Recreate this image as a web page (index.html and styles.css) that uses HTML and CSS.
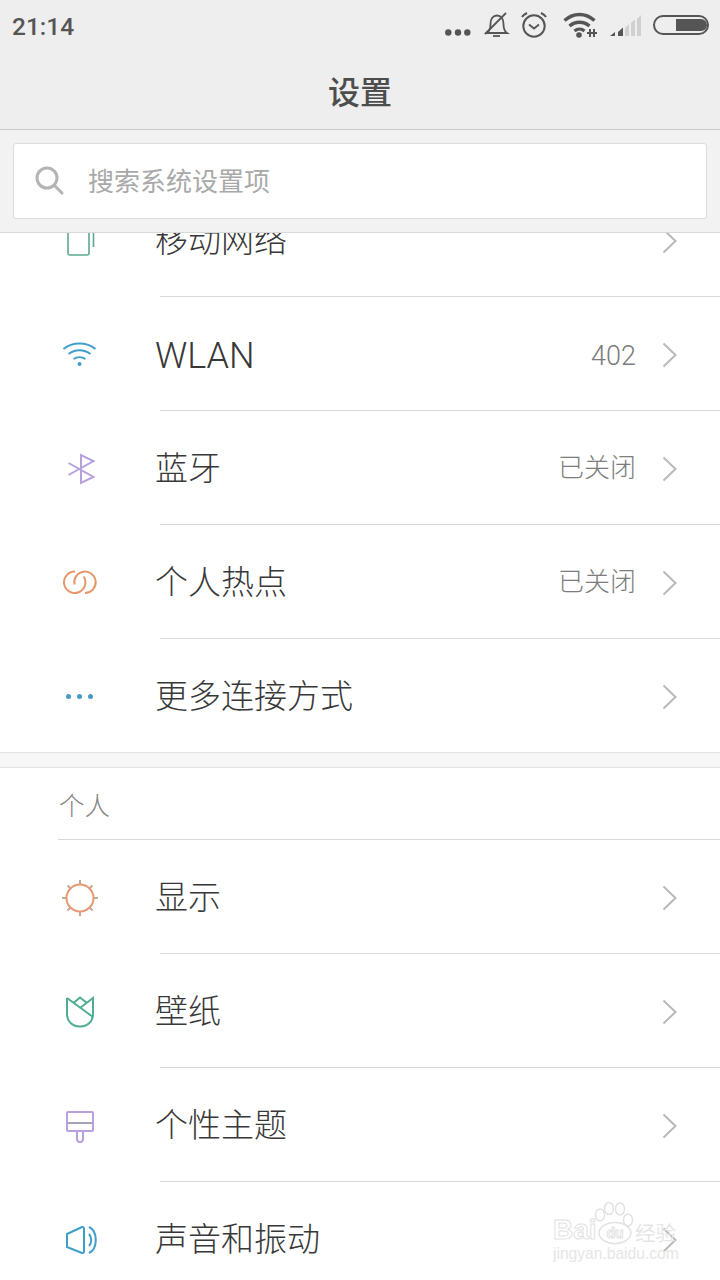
FILE: index.html
```html
<!DOCTYPE html>
<html lang="zh">
<head>
<meta charset="utf-8">
<title>设置</title>
<link rel="stylesheet" href="styles.css">
</head>
<body>
<div class="phone">
  <header class="top">
    <div class="status">
      <span class="time">21:14</span>
      <svg class="status-icons" width="270" height="40" viewBox="0 0 270 40" fill="none" stroke="#555" stroke-width="2">
        <g fill="#555" stroke="none"><circle cx="8.300" cy="21.500" r="3.200"/><circle cx="18" cy="21.500" r="3.200"/><circle cx="27.300" cy="21.500" r="3.200"/></g>
        <path d="M47 22c3-2 3.500-5 3.500-9 0-5 2.500-8.500 6.500-8.500s6.500 3.500 6.500 8.500c0 4 .5 7 3.500 9z" stroke-width="1.800"/>
        <path d="M45 23 66 2" stroke-width="1.800"/>
        <path d="M53 25h7" stroke-width="1.800"/>
        <circle cx="94" cy="15" r="10.700" stroke-width="2"/>
        <path d="M89 13.500l5 4 5-4" stroke-width="1.800"/>
        <path d="M82 6c1-2 3-3 5-4M106 6c-1-2-3-3-5-4" stroke-width="2"/>
        <path d="M124.500 9.500c9-8 21-8 30 0" stroke-width="3.400"/>
        <path d="M129.500 15c6-5 14-5 20 0" stroke-width="3.400"/>
        <path d="M134.500 20c3-2.500 7-2.500 10 0" stroke-width="3.200"/>
        <circle cx="139" cy="24" r="2.800" fill="#555" stroke="none"/>
        <path d="M150 18v8M154 18v8M147 22h10" stroke-width="2"/>
        <path d="M170 25l5-4v4z" fill="#555" stroke="none"/>
        <path d="M178 21l5-4.500V25h-5z" fill="#555" stroke="none"/>
        <path d="M185 17l4-4v12h-4z" fill="#d0d0d0" stroke="none"/>
        <path d="M191 12l4-3.500V25h-4z" fill="#d0d0d0" stroke="none"/>
        <path d="M197 8l4-4v21h-4z" fill="#d0d0d0" stroke="none"/>
        <rect x="214" y="5" width="54" height="18" rx="9" stroke-width="2"/>
        <path d="M236 8h25a6 6 0 0 1 0 12h-25z" fill="#555" stroke="none"/>
      </svg>
    </div>
    <h1 class="title">设置</h1>
  </header>
  <div class="search-wrap">
    <div class="search">
      <svg class="search-icon" width="30" height="30" viewBox="0 0 30 30" fill="none" stroke="#b4b4b4" stroke-width="3">
        <circle cx="12" cy="12" r="10"/><path d="M19.500 19.500 27 27" stroke-linecap="round"/>
      </svg>
      <span class="search-text">搜索系统设置项</span>
    </div>
  </div>
  <main class="list">
    <div class="scroller">
      <div class="row">
        <span class="ico"><svg width="40" height="40" viewBox="0 0 40 40" fill="none" stroke="#5ea893" stroke-width="1.600"><rect x="9" y="3" width="21" height="32" rx="2"/><path d="M34.500 9v18"/></svg></span>
        <span class="label">移动网络</span>
        <svg class="chev" width="16" height="26" viewBox="0 0 16 26" fill="none" stroke="#b9b9b9" stroke-width="2"><path d="M1.500 1.500 13.500 13 1.500 24.500"/></svg>
      </div>
      <div class="row">
        <span class="ico"><svg width="40" height="40" viewBox="0 0 40 40" fill="none" stroke="#409fc9" stroke-width="2"><path d="M4.500 15c9-7.500 23-7.500 32 0"/><path d="M9.500 20c6.500-5 15.500-5 22 0"/><path d="M14.500 25c3.500-2.500 8.500-2.500 12 0"/><circle cx="20.500" cy="30" r="2" fill="#409fc9" stroke="none"/></svg></span>
        <span class="label latin">WLAN</span>
        <span class="value latin-value">402</span>
        <svg class="chev" width="16" height="26" viewBox="0 0 16 26" fill="none" stroke="#b9b9b9" stroke-width="2"><path d="M1.500 1.500 13.500 13 1.500 24.500"/></svg>
      </div>
      <div class="row">
        <span class="ico"><svg width="40" height="40" viewBox="0 0 40 40" fill="none" stroke="#b7a0de" stroke-width="2"><path d="M9.500 15l25 14L22 35V7l12.500 6-25 14"/></svg></span>
        <span class="label">蓝牙</span>
        <span class="value">已关闭</span>
        <svg class="chev" width="16" height="26" viewBox="0 0 16 26" fill="none" stroke="#b9b9b9" stroke-width="2"><path d="M1.500 1.500 13.500 13 1.500 24.500"/></svg>
      </div>
      <div class="row">
        <span class="ico"><svg width="40" height="40" viewBox="0 0 40 40" fill="none" stroke="#e6986c" stroke-width="2"><path d="M16 9.600A10.700 10.700 0 1 0 24.700 14.500"/><path d="M15.500 22.500A10.700 10.700 0 1 1 26 31"/></svg></span>
        <span class="label">个人热点</span>
        <span class="value">已关闭</span>
        <svg class="chev" width="16" height="26" viewBox="0 0 16 26" fill="none" stroke="#b9b9b9" stroke-width="2"><path d="M1.500 1.500 13.500 13 1.500 24.500"/></svg>
      </div>
      <div class="row row-last">
        <span class="ico"><svg width="40" height="40" viewBox="0 0 40 40" fill="#4499c8"><circle cx="9.500" cy="20.500" r="2.500"/><circle cx="20.500" cy="20.500" r="2.500"/><circle cx="31.500" cy="20.500" r="2.500"/></svg></span>
        <span class="label">更多连接方式</span>
        <svg class="chev" width="16" height="26" viewBox="0 0 16 26" fill="none" stroke="#b9b9b9" stroke-width="2"><path d="M1.500 1.500 13.500 13 1.500 24.500"/></svg>
      </div>
      <div class="gap"></div>
      <div class="section">个人</div>
      <div class="row">
        <span class="ico"><svg width="40" height="40" viewBox="0 0 40 40" fill="none" stroke="#e59a6f" stroke-width="2"><circle cx="21" cy="21" r="13.500"/><path stroke="#c9a690" d="M21 3v4M21 35v4M3 21h4M35 21h4M8.500 8.500l3 3M30.500 30.500l3 3M8.500 33.500l3-3M30.500 11.500l3-3"/></svg></span>
        <span class="label">显示</span>
        <svg class="chev" width="16" height="26" viewBox="0 0 16 26" fill="none" stroke="#b9b9b9" stroke-width="2"><path d="M1.500 1.500 13.500 13 1.500 24.500"/></svg>
      </div>
      <div class="row">
        <span class="ico"><svg width="40" height="40" viewBox="0 0 40 40" fill="none" stroke="#4fae92" stroke-width="2"><path d="M8 7v16c0 8 6 12.500 13 12.500S34 31 34 23V7L21 17"/><path d="M8 7l26 19"/><path d="M14.500 12 21 6.500 28 12"/></svg></span>
        <span class="label">壁纸</span>
        <svg class="chev" width="16" height="26" viewBox="0 0 16 26" fill="none" stroke="#b9b9b9" stroke-width="2"><path d="M1.500 1.500 13.500 13 1.500 24.500"/></svg>
      </div>
      <div class="row">
        <span class="ico"><svg width="40" height="40" viewBox="0 0 40 40" fill="none" stroke="#b9a0e0" stroke-width="2"><path d="M9 7h24a1 1 0 0 1 1 1v17a1 1 0 0 1-1 1H9a1 1 0 0 1-1-1V8a1 1 0 0 1 1-1z"/><path d="M8 18h26" stroke="#aa9fbd"/><path d="M18 26v8a3 3 0 0 0 6 0v-8"/></svg></span>
        <span class="label">个性主题</span>
        <svg class="chev" width="16" height="26" viewBox="0 0 16 26" fill="none" stroke="#b9b9b9" stroke-width="2"><path d="M1.500 1.500 13.500 13 1.500 24.500"/></svg>
      </div>
      <div class="row">
        <span class="ico"><svg width="40" height="40" viewBox="0 0 40 40" fill="none" stroke="#409fc9" stroke-width="2"><path d="M8 15 23 8a1.500 1.500 0 0 1 2 1.500v23a1.500 1.500 0 0 1-2 1.500L8 28z"/><path d="M30 15c3 3.500 3 8.500 0 12"/><path d="M30 8c9 4 9 22 0 26"/></svg></span>
        <span class="label">声音和振动</span>
        <svg class="chev" width="16" height="26" viewBox="0 0 16 26" fill="none" stroke="#b9b9b9" stroke-width="2"><path d="M1.500 1.500 13.500 13 1.500 24.500"/></svg>
      </div>
    </div>
  </main>
  <svg class="mark" width="130" height="70" viewBox="0 0 130 70">
    <text class="mark-bai" x="0" y="39">Bai</text>
    <g class="mark-paw">
      <ellipse cx="62" cy="33" rx="16" ry="10.500"/>
      <ellipse cx="47" cy="15" rx="4.500" ry="6"/>
      <ellipse cx="56" cy="8.500" rx="4.500" ry="6"/>
      <ellipse cx="67" cy="9" rx="4.500" ry="6"/>
      <ellipse cx="75" cy="20" rx="4.500" ry="6"/>
    </g>
    <text class="mark-du" x="62" y="38">du</text>
    <text class="mark-cn" x="82" y="41">经验</text>
    <text class="mark-url" x="0" y="59">jingyan.baidu.com</text>
  </svg>
</div>
</body>
</html>
```
FILE: styles.css
```css
* { box-sizing: border-box; }
html, body { margin: 0; padding: 0; }
body {
  background: #fff;
  font-family: "Noto Sans CJK SC", "Noto Sans", sans-serif;
  color: #3c3c3c;
}
.phone {
  position: relative;
  width: 720px;
  height: 1280px;
  overflow: hidden;
  display: flex;
  flex-direction: column;
}
.top {
  height: 130px;
  flex: none;
  background: #eeeeee;
  border-bottom: 1px solid #c9c9c9;
}
.status {
  height: 52px;
  display: flex;
  align-items: flex-start;
  justify-content: space-between;
  padding: 11px 10px 0 12px;
}
.time {
  font-family: Roboto, sans-serif;
  font-size: 24.500px;
  line-height: 32px;
  font-weight: 500;
  color: #555;
}
.title {
  margin: 0;
  padding-top: 16px;
  text-align: center;
  font-size: 32px;
  line-height: 44px;
  font-weight: 500;
  color: #4d4d4d;
}
.search-wrap {
  height: 103px;
  flex: none;
  background: #f2f2f2;
  border-bottom: 1px solid #d9d9d9;
  padding: 13px 13px 0;
}
.search {
  height: 76px;
  background: #fff;
  border: 1px solid #dcdcdc;
  border-radius: 3px;
  display: flex;
  align-items: center;
  padding-left: 21px;
  gap: 23px;
}
.search-icon { flex: none; }
.search-text {
  font-size: 26px;
  line-height: 36px;
  margin-bottom: 2px;
  color: #a9a9a9;
}
.list {
  flex: 1;
  overflow: hidden;
  min-height: 0;
}
.scroller { margin-top: -50px; }
.row {
  position: relative;
  height: 114px;
  display: flex;
  align-items: center;
  padding-right: 42px;
}
.row::after {
  content: "";
  position: absolute;
  left: 160px;
  right: 0;
  bottom: 0;
  height: 1px;
  background: #d9d9d9;
}
.row-last { height: 113px; }
.row-last::after { display: none; }
.ico {
  width: 40px;
  height: 40px;
  margin-left: 59px;
  margin-right: 56px;
  flex: none;
}
.ico svg { display: block; }
.label {
  flex: 1;
  font-size: 33px;
  line-height: 44px;
  margin-bottom: 4px;
  font-weight: 300;
  color: #383838;
  white-space: nowrap;
}
.latin {
  font-family: Roboto, sans-serif;
  font-size: 36px;
  margin-bottom: 0;
  margin-top: 4px;
}
.value {
  font-size: 26px;
  line-height: 36px;
  margin-bottom: 4px;
  font-weight: 300;
  color: #7c7c7c;
  margin-right: 26px;
}
.latin-value {
  font-family: Roboto, sans-serif;
  font-size: 27px;
  margin-bottom: 0;
  margin-top: 4px;
}
.chev {
  flex: none;
  margin-top: 2px;
}
.gap {
  height: 16px;
  background: #f6f6f6;
  border-top: 1px solid #e2e2e2;
  border-bottom: 1px solid #e2e2e2;
}
.section {
  height: 72px;
  margin-left: 58px;
  padding-left: 1px;
  border-bottom: 1px solid #d9d9d9;
  font-size: 25.500px;
  font-weight: 300;
  line-height: 72px;
  color: #848484;
}
.mark {
  position: absolute;
  left: 553px;
  top: 1200px;
  pointer-events: none;
}
.mark-bai, .mark-du {
  font-family: "Liberation Sans", sans-serif;
  font-weight: 700;
  fill: none;
  stroke: #e2e2e2;
  stroke-width: 1;
}
.mark-bai { font-size: 28px; }
.mark-du { font-size: 14px; text-anchor: middle; }
.mark-paw { fill: none; stroke: #e2e2e2; stroke-width: 1.500; }
.mark-cn {
  font-family: "Noto Sans CJK SC", sans-serif;
  font-size: 20.500px;
  fill: #e6e6e6;
}
.mark-url {
  font-family: "Liberation Sans", sans-serif;
  font-size: 15.600px;
  fill: #e6e6e6;
}
```
